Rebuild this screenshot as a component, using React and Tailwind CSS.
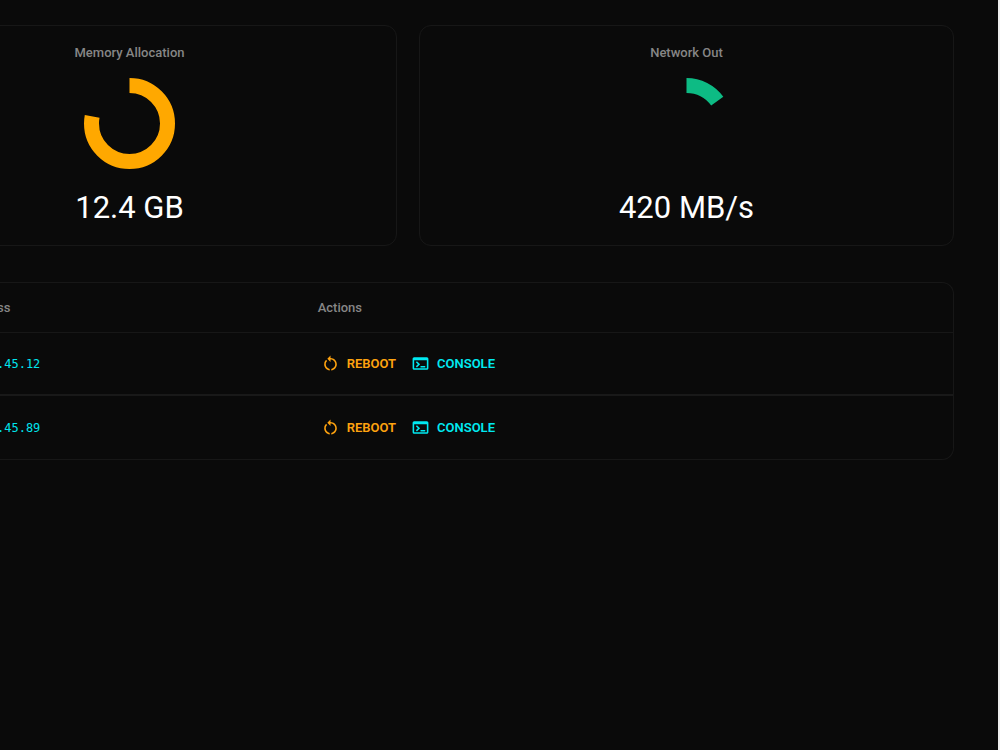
import React from 'react';
import { MdRestartAlt, MdOutlineTerminal } from 'react-icons/md';

const metrics = [
  { label: 'Memory Allocation', value: '12.4 GB', percent: 78, color: '#ffa800' },
  { label: 'Network Out', value: '420 MB/s', percent: 15, color: '#0dbb84' },
];

const servers = ['.45.12', '.45.89'];

function Donut({ percent, color }) {
  return (
    <svg viewBox="0 0 91 91" className="size-[91px] -rotate-90" aria-hidden="true">
      <circle
        cx="45.5"
        cy="45.5"
        r="38"
        fill="none"
        stroke={color}
        strokeWidth="15"
        pathLength="100"
        strokeDasharray={`${percent} 100`}
      />
    </svg>
  );
}

function MetricCard({ label, value, percent, color }) {
  return (
    <section className="flex flex-col items-center rounded-xl border border-[#171717] pt-[18px] pb-[15px]">
      <h2 className="mb-4 text-[13px] leading-[18px] font-medium text-[#868686]">{label}</h2>
      <Donut percent={percent} color={color} />
      <p className="mt-[17px] text-[31px] leading-[44px] text-white">{value}</p>
    </section>
  );
}

function ServerTable() {
  return (
    <div className="rounded-r-xl border border-l-0 border-[#171717]">
      <table className="w-full table-fixed border-separate border-spacing-0 text-left text-[13px]">
        <thead>
          <tr className="h-[50px] text-[#868686]">
            <th className="w-1/3 border-b border-[#171717] font-medium">
              <span className="-ml-[3px] block">ss</span>
            </th>
            <th className="border-b border-[#171717] font-medium">Actions</th>
          </tr>
        </thead>
        <tbody className="[&>tr:not(:last-child)>td]:border-b-2">
          {servers.map((address) => (
            <tr key={address} className="h-[63px]">
              <td className="border-[#191919] font-['DejaVu_Sans_Mono',monospace] text-xs text-[#00e5ee]">
                <span className="-ml-[3px] block">{address}</span>
              </td>
              <td className="border-[#191919]">
                <div className="flex items-center gap-[15px] pl-[3px] font-semibold">
                  <button type="button" className="flex items-center gap-[7px] text-[#ffa30f]">
                    <MdRestartAlt className="size-[19px]" />
                    REBOOT
                  </button>
                  <button type="button" className="flex items-center gap-[7px] text-[#00eaf2]">
                    <MdOutlineTerminal className="size-[19px]" />
                    CONSOLE
                  </button>
                </div>
              </td>
            </tr>
          ))}
        </tbody>
      </table>
    </div>
  );
}

export default function App() {
  return (
    <div className="min-h-screen overflow-hidden border-r-2 border-[#eeeeee] bg-[#0a0a0a] pt-[25px] pr-11 font-[Roboto,sans-serif]">
      <div className="-ml-[138px] grid grid-cols-2 gap-[22px]">
        {metrics.map((metric) => (
          <MetricCard key={metric.label} {...metric} />
        ))}
      </div>
      <div className="mt-9">
        <ServerTable />
      </div>
    </div>
  );
}
